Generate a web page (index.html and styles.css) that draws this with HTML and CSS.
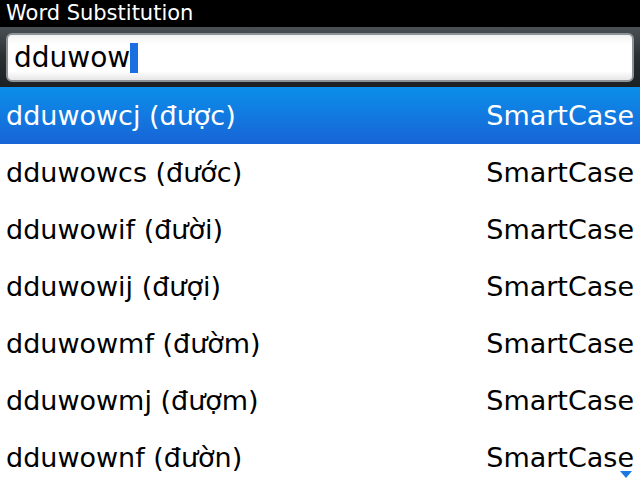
FILE: index.html
```html
<html>
<head>
    <meta charset="UTF-8">
    <title>Word Substitution</title>
    <link rel="stylesheet" href="styles.css">
</head>
<body>
    <div class="titlebar">Word Substitution</div>
    <div class="searchbar">
        <div class="searchbox"><span class="typed">dduwow</span><span class="caret"></span></div>
    </div>
    <div class="list">
        <div class="row selected"><span>dduwowcj (được)</span><span>SmartCase</span></div>
        <div class="row"><span>dduwowcs (đước)</span><span>SmartCase</span></div>
        <div class="row"><span>dduwowif (đười)</span><span>SmartCase</span></div>
        <div class="row"><span>dduwowij (đượi)</span><span>SmartCase</span></div>
        <div class="row"><span>dduwowmf (đườm)</span><span>SmartCase</span></div>
        <div class="row"><span>dduwowmj (đượm)</span><span>SmartCase</span></div>
        <div class="row"><span>dduwownf (đườn)</span><span>SmartCase</span></div>
    </div>
    <svg class="more" width="12" height="7" viewBox="0 0 12 7"><path d="M0 0 H12 L6 7 Z" fill="#1a78e0"/></svg>
</body>
</html>
```

FILE: styles.css
```css
body {
    margin: 0;
    width: 640px;
    height: 480px;
    overflow: hidden;
    background: white;
    font-family: "DejaVu Sans", "Open Sans", sans-serif;
    position: relative;
}
.titlebar {
    height: 27px;
    background: black;
    color: white;
    font-size: 21px;
    line-height: 27px;
    padding-left: 6px;
}
.searchbar {
    height: 60px;
    box-sizing: border-box;
    padding: 6px 6px 5px 6px;
    background: linear-gradient(#4a5054, #2a2f32 50%, #1c2022);
}
.searchbox {
    height: 49px;
    box-sizing: border-box;
    background: linear-gradient(#f2f2f2, white 20%, white 80%, #e6e6e6);
    border: 2px solid #8c9296;
    border-radius: 6px;
    display: flex;
    align-items: center;
    padding-left: 6px;
    font-size: 28px;
    color: black;
}
.caret {
    width: 8px;
    height: 30px;
    background: #1c6fe0;
}
.row {
    height: 57px;
    display: flex;
    justify-content: space-between;
    align-items: center;
    padding: 0 6px;
    font-size: 27px;
    color: black;
}
.row.selected {
    background: linear-gradient(#0b8fea, #1864d6);
    color: white;
}
.more {
    position: absolute;
    right: 8px;
    bottom: 2px;
}
```
